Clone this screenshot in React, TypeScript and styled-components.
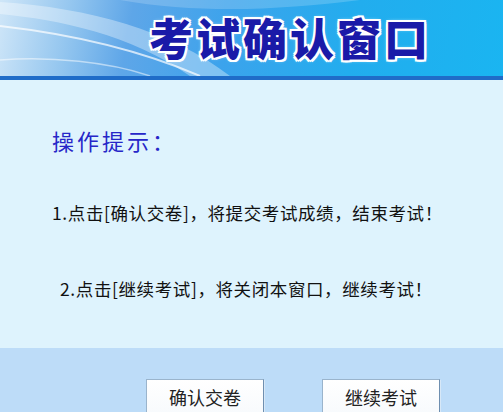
import styled, { createGlobalStyle } from "styled-components";

const GlobalStyle = createGlobalStyle`
  html, body {
    margin: 0;
    padding: 0;
    background: #def3fd;
  }
  body {
    font-family: "Noto Sans CJK SC", "Noto Sans", sans-serif;
  }
`;

const Window = styled.div`
  width: 503px;
  height: 412px;
  display: flex;
  flex-direction: column;
  overflow: hidden;
  background: #def3fd;
`;

const Header = styled.header`
  position: relative;
  height: 80px;
  flex-shrink: 0;
  display: flex;
  align-items: flex-start;
  justify-content: flex-end;
  padding: 4px 72px 0 0;
  box-sizing: border-box;
  overflow: hidden;
  background: linear-gradient(
    100deg,
    #cfe6f8 0%,
    #94c6ef 14%,
    #5ea6e8 26%,
    #3ca3ec 45%,
    #22adee 70%,
    #1ab5f1 100%
  );
  border-bottom: 4px solid #1f6cc8;
`;

const Swoosh = styled.svg`
  position: absolute;
  left: 0;
  top: 0;
  width: 503px;
  height: 76px;
`;

const Title = styled.h1`
  position: relative;
  margin: 0;
  font-size: 44px;
  font-weight: 900;
  letter-spacing: 3px;
  line-height: 66px;
  color: #1a1aa8;
  text-shadow: 2px 0 0 #fff, -2px 0 0 #fff, 0 2px 0 #fff, 0 -2px 0 #fff,
    2px 2px 0 #fff, -2px -2px 0 #fff, 2px -2px 0 #fff, -2px 2px 0 #fff,
    0 0 4px #e8f6ff;
`;

const Content = styled.main`
  flex: 1;
  display: flex;
  flex-direction: column;
  padding: 45px 0 0 52px;
`;

const Heading = styled.h2`
  margin: 0;
  font-size: 22px;
  font-weight: 400;
  letter-spacing: 3px;
  line-height: 30px;
  color: #2626c8;
`;

const Tip = styled.p<{ $indent: number }>`
  margin: 0;
  padding-left: ${(p) => p.$indent}px;
  font-size: 17.5px;
  letter-spacing: 0.6px;
  line-height: 24px;
  color: #111;
`;

const Tips = styled.div`
  display: flex;
  flex-direction: column;
  gap: 52px;
  margin-top: 46px;
`;

const Footer = styled.footer`
  height: 64px;
  flex-shrink: 0;
  background: #bddcf8;
  display: flex;
  align-items: flex-start;
  padding: 31px 0 0 146px;
  box-sizing: border-box;
  gap: 58px;
`;

const Button = styled.button`
  width: 118px;
  height: 44px;
  border: 1px solid #9ab4cc;
  border-right-color: #6f8fb0;
  background: linear-gradient(#ffffff, #f6f9fc);
  font-family: "Noto Sans CJK SC", sans-serif;
  font-size: 18px;
  color: #222;
  padding: 0 0 8px;
  cursor: pointer;
  box-shadow: 1px 1px 0 #d7e8f7;
`;

export default function App() {
  return (
    <Window>
      <GlobalStyle />
      <Header>
        <Swoosh viewBox="0 0 503 76" preserveAspectRatio="none">
          <path
            d="M0 14 C60 20 130 34 190 76 L230 76 C170 30 90 8 0 2 Z"
            fill="#ffffff"
            opacity="0.35"
          />
          <path
            d="M0 26 C70 34 140 50 200 76"
            stroke="#ffffff"
            strokeWidth="2"
            fill="none"
            opacity="0.7"
          />
          <path
            d="M0 60 C50 56 110 62 150 76"
            stroke="#ffffff"
            strokeWidth="1.5"
            fill="none"
            opacity="0.5"
          />
          <path
            d="M120 0 C200 14 280 10 360 0 Z"
            fill="#ffffff"
            opacity="0.18"
          />
        </Swoosh>
        <Title>考试确认窗口</Title>
      </Header>
      <Content>
        <Heading>操作提示：</Heading>
        <Tips>
          <Tip $indent={0}>1.点击[确认交卷]，将提交考试成绩，结束考试！</Tip>
          <Tip $indent={8}>2.点击[继续考试]，将关闭本窗口，继续考试！</Tip>
        </Tips>
      </Content>
      <Footer>
        <Button>确认交卷</Button>
        <Button>继续考试</Button>
      </Footer>
    </Window>
  );
}
